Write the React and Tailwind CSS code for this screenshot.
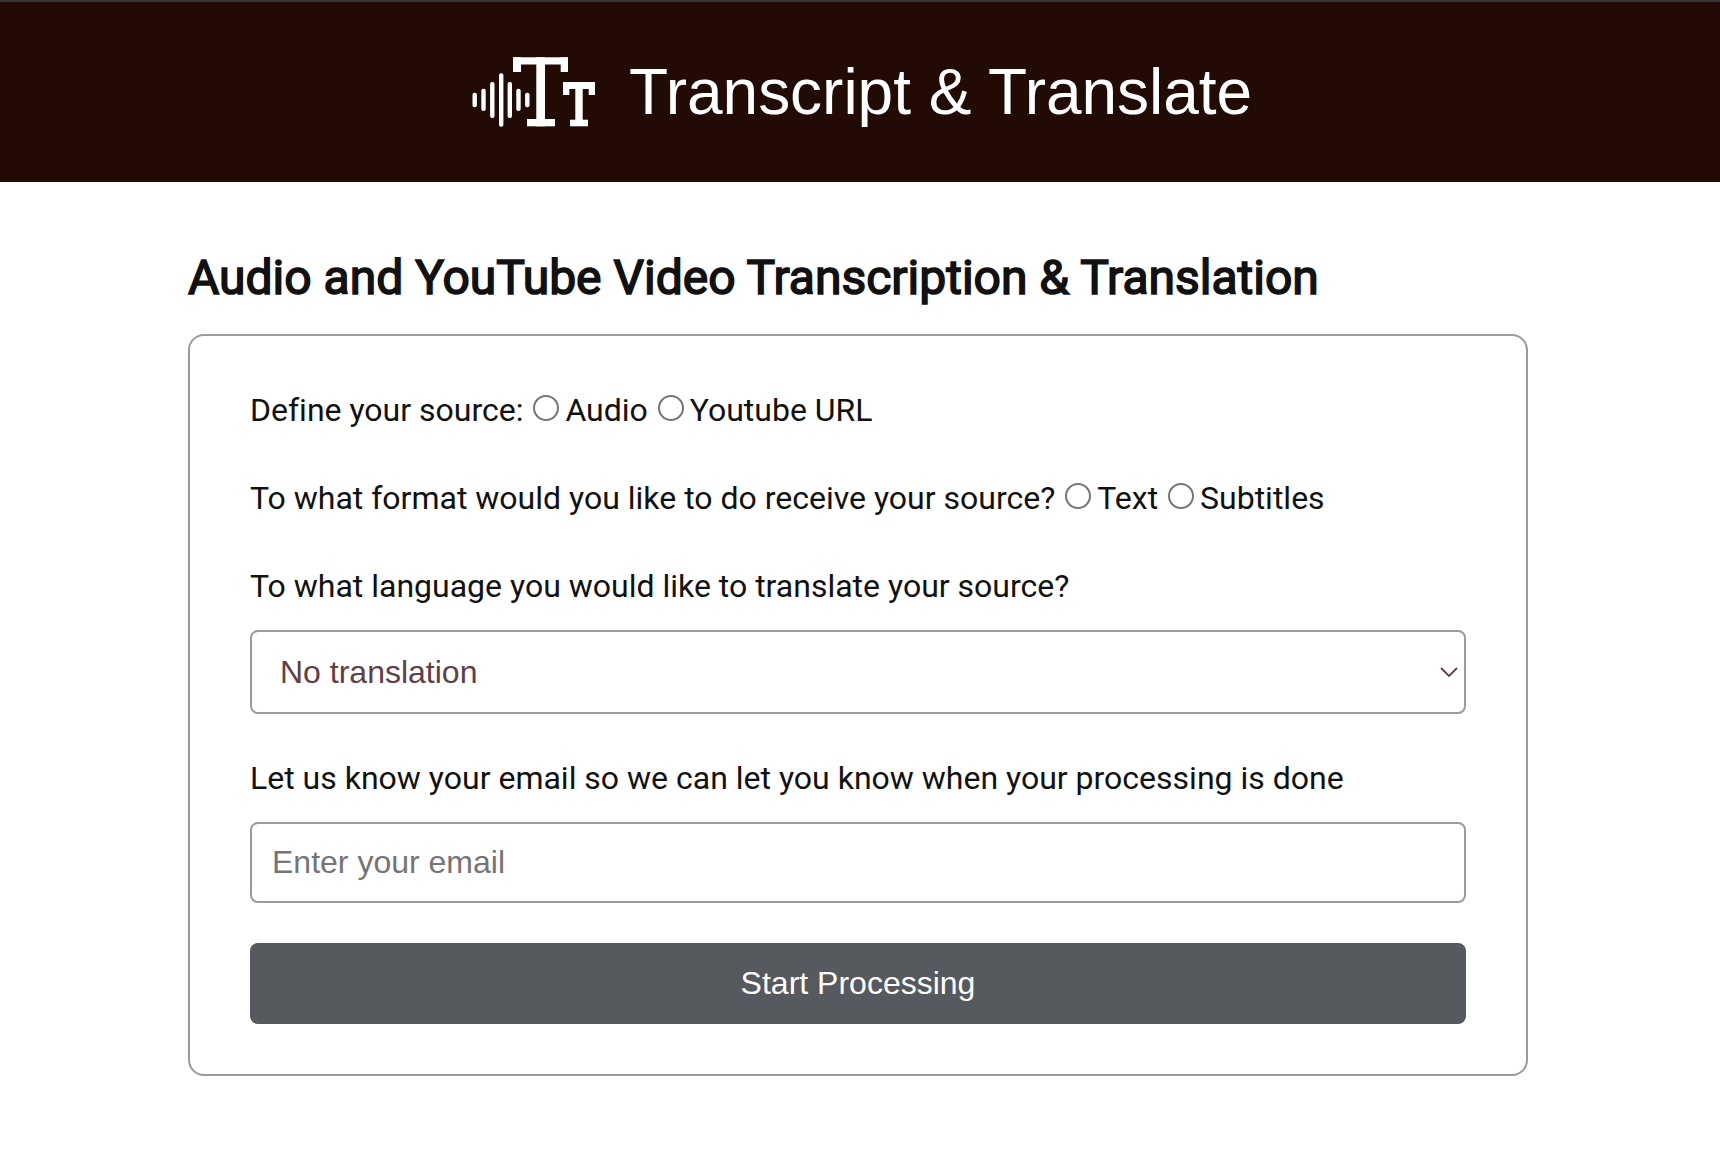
function Radio({ name }) {
  return (
    <input
      type="radio"
      name={name}
      className="mr-[6px] ml-[2px] inline-block size-[26px] appearance-none rounded-full border-2 border-[#767676] bg-white align-baseline"
    />
  );
}

const bars = [
  [472.5, 92.7, 14.5],
  [481.3, 88.7, 22.4],
  [490.1, 82, 36],
  [499, 73.3, 53.4],
  [507.6, 82, 36],
  [516.3, 88.7, 22.4],
  [525.1, 92.7, 14.5],
];

const strokes = [
  [513, 57.3, 55, 7.2],
  [513, 57.3, 8, 14.7],
  [560.7, 57.3, 7.3, 14.7],
  [536.3, 57.3, 8.7, 69],
  [527, 119, 28, 7.3],
  [563, 82, 32, 7],
  [563, 82, 6.3, 13],
  [588.7, 82, 6.3, 13],
  [575.3, 82, 7.4, 44],
  [570, 119.7, 18, 6.6],
];

function Logo() {
  return (
    <svg className="mr-[33px] h-[74px] w-[126px] shrink-0" viewBox="470 55 126 74" fill="#fff">
      {bars.map(([x, y, h]) => (
        <rect key={x} x={x} y={y} width="4.4" height={h} rx="2" />
      ))}
      {strokes.map(([x, y, w, h]) => (
        <rect key={`${x}-${w}`} x={x} y={y} width={w} height={h} />
      ))}
    </svg>
  );
}

export default function App() {
  return (
    <div className="min-h-[1150px] bg-white font-['Roboto',sans-serif] text-[32px] leading-[48px] text-[#111]">
      <header className="flex h-[182px] items-center border-t-2 border-[#30343b] bg-[#220b05] pl-[470px] text-white">
        <Logo />
        <h1 className="font-['Liberation_Sans',Arial,sans-serif] text-[64px] leading-[72px] tracking-[-0.02px] whitespace-nowrap">Transcript &amp; Translate</h1>
      </header>
      <main className="ml-[188px] w-[1340px] pt-[64px]">
        <h2 className="text-[48px] leading-[64px] font-normal whitespace-nowrap [-webkit-text-stroke:1.6px_#111]">
          Audio and YouTube Video Transcription &amp; Translation
        </h2>
        <form className="mt-6 h-[742px] rounded-[16px] border-2 border-[#9b9b9b] px-[60px] pt-[50px] [font-variant-ligatures:none]">
          <div className="h-[48px] whitespace-nowrap">
            Define your source: <Radio name="source" />Audio <Radio name="source" />Youtube URL
          </div>
          <div className="mt-[40px] h-[48px] whitespace-nowrap">
            To what format would you like to do receive your source? <Radio name="format" />Text <Radio name="format" />Subtitles
          </div>
          <p className="mt-[40px]">To what language you would like to translate your source?</p>
          <div className="mt-[20px] flex h-[84px] items-center justify-between rounded-[8px] border-2 border-[#9b9b9b] pr-[6px] pl-[28px] font-['Liberation_Sans',Arial,sans-serif] text-[#5f4048]">
            <span className="leading-[36px]">No translation</span>
            <svg className="h-[12px] w-[18px]" viewBox="0 0 18 12" fill="none" stroke="currentColor" strokeWidth="1.8">
              <path d="M1 2L9 10L17 2" />
            </svg>
          </div>
          <p className="mt-[40px]">Let us know your email so we can let you know when your processing is done</p>
          <input
            type="email"
            placeholder="Enter your email"
            className="mt-[20px] block h-[81px] w-full rounded-[8px] border-2 border-[#9b9b9b] px-[20px] pb-px font-['Liberation_Sans',Arial,sans-serif] leading-[36px] placeholder:text-[#757575]"
          />
          <button
            type="button"
            className="mt-[40px] block h-[81px] w-full rounded-[8px] bg-[#56595d] pb-px font-['Liberation_Sans',Arial,sans-serif] leading-[36px] text-white"
          >
            Start Processing
          </button>
        </form>
      </main>
    </div>
  );
}
